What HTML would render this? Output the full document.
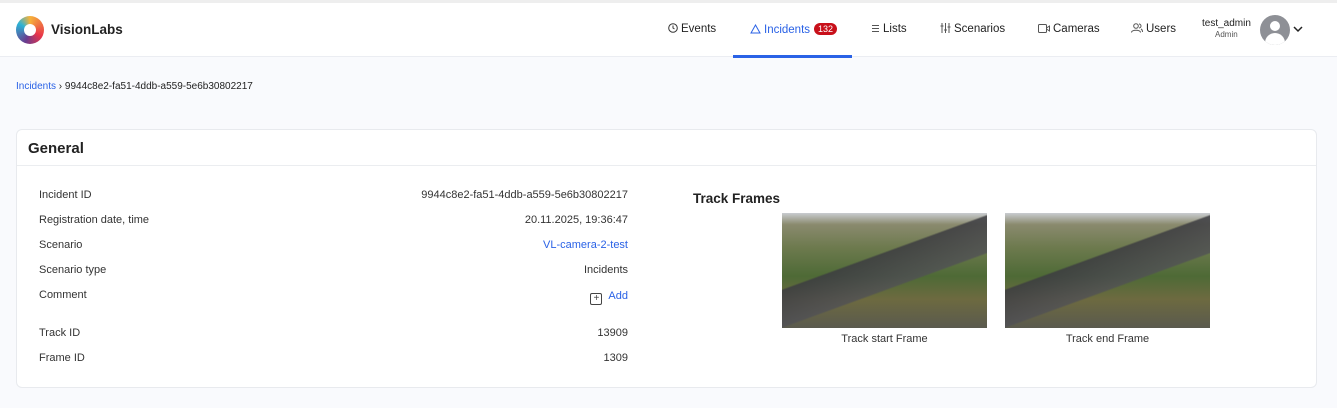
<!DOCTYPE html>
<html><head><meta charset="utf-8"><style>
*{box-sizing:border-box;margin:0;padding:0}
body{width:1337px;height:408px;background:#f9fafd;font-family:"Liberation Sans",sans-serif;color:#222;position:relative;overflow:hidden;font-size:11px}
.top{position:absolute;left:0;top:0;width:1337px;height:3px;background:#eee}
.nav{position:absolute;left:0;top:3px;width:1337px;height:54px;background:#fff;border-bottom:1px solid #ebedf2}
.logo{position:absolute;left:16px;top:13px;width:28px;height:28px;border-radius:50%;background:conic-gradient(#f6b23a,#e8344a 120deg,#6a3b8e 200deg,#2bb3d6 300deg,#f6b23a)}
.logo:after{content:"";position:absolute;left:8px;top:8px;width:12px;height:12px;border-radius:50%;background:#fff}
.brand{position:absolute;left:51px;top:19px;font-size:13.5px;font-weight:bold;color:#222}
.it{position:absolute;top:20px;font-size:11.5px;color:#222;white-space:nowrap}
.it svg{vertical-align:-1px;margin-right:3px}
.act{color:#2a62e6}
.ul{position:absolute;left:733px;top:52px;width:119px;height:3px;background:#2a62e6}
.badge{display:inline-block;background:#c8101a;color:#fff;border-radius:8px;font-size:9px;padding:1px 4px;margin-left:4px;vertical-align:1px}
.crumb{position:absolute;left:16px;top:81px;font-size:10px}
.card{position:absolute;left:16px;top:129px;width:1301px;height:259px;background:#fff;border:1px solid #e8eaee;border-radius:6px}
.card h2{position:absolute;left:11px;top:10px;font-size:15px;font-weight:bold}
.hl{position:absolute;left:0;top:35px;width:100%;height:1px;background:#ebedf0}
.l{position:absolute;left:22px;font-size:11px;color:#333}
.r{position:absolute;right:688px;font-size:11px;color:#333;text-align:right}
.tf{position:absolute;left:676px;top:61px;font-size:13.5px;font-weight:bold;color:#222}
.img{position:absolute;top:83px;width:205px;height:115px;background:
linear-gradient(160deg,transparent 40%,rgba(60,60,65,.85) 41%,rgba(80,80,85,.8) 60%,transparent 61%),
linear-gradient(180deg,#c9ccd0 0%,#8a8a6e 10%,#6d7a4e 30%,#4e6a36 55%,#6d6a40 75%,#5a5a4e 100%)}
.cap{position:absolute;top:203px;width:205px;text-align:center;font-size:11px;color:#333}
</style></head><body>
<div class="top"></div>
<div class="nav">
<div class="logo"></div><div class="brand">VisionLabs</div>
<div class="it" style="left:668px"><svg width="10" height="10" viewBox="0 0 10 10" fill="none" stroke="#333"><circle cx="5" cy="5" r="4.3"/><path d="M5 2.5V5l1.5 1"/></svg>Events</div>
<div class="it act" style="left:750px"><svg width="11" height="10" viewBox="0 0 11 10" fill="none" stroke="#2a62e6"><path d="M5.5 1L10 9H1z"/></svg>Incidents<span class="badge">132</span></div>
<div class="it" style="left:871px"><svg width="9" height="9" viewBox="0 0 9 9" stroke="#555"><path d="M1 1.5h7M1 4.5h7M1 7.5h7"/></svg>Lists</div>
<div class="it" style="left:940px"><svg width="11" height="10" viewBox="0 0 11 10" stroke="#555"><path d="M2 0v10M5.5 0v10M9 0v10M0.5 3h3M4 7h3M7.5 4h3"/></svg>Scenarios</div>
<div class="it" style="left:1038px"><svg width="12" height="9" viewBox="0 0 12 9" fill="none" stroke="#555"><rect x="0.5" y="0.5" width="8" height="8" rx="1"/><path d="M8.5 4l3-2v5l-3-2"/></svg>Cameras</div>
<div class="it" style="left:1131px"><svg width="12" height="10" viewBox="0 0 12 10" fill="none" stroke="#555"><circle cx="5" cy="3" r="2.3"/><path d="M0.5 9.5c0-3 9-3 9 0M8 1a2 2 0 010 4M10 6c1 .5 1.5 1.5 1.5 3"/></svg>Users</div>
<div style="position:absolute;left:1202px;top:15px;font-size:10px">test_admin</div>
<div style="position:absolute;left:1215px;top:27px;font-size:8px;color:#555">Admin</div>
<div style="position:absolute;left:1260px;top:12px;width:30px;height:30px;border-radius:50%;background:#8e9096;overflow:hidden"><div style="position:absolute;left:10px;top:6px;width:10px;height:10px;border-radius:50%;background:#fff"></div><div style="position:absolute;left:5px;top:18px;width:20px;height:14px;border-radius:10px 10px 0 0;background:#fff"></div></div>
<svg style="position:absolute;left:1293px;top:23px" width="10" height="7" viewBox="0 0 10 7" fill="none" stroke="#222" stroke-width="1.5"><path d="M1 1l4 4 4-4"/></svg>
<div class="ul"></div>
</div>
<div class="crumb"><span style="color:#2a62e6">Incidents</span> › 9944c8e2-fa51-4ddb-a559-5e6b30802217</div>
<div class="card">
<h2>General</h2><div class="hl"></div>
<div class="l" style="top:59px">Incident ID</div><div class="r" style="top:59px">9944c8e2-fa51-4ddb-a559-5e6b30802217</div>
<div class="l" style="top:84px">Registration date, time</div><div class="r" style="top:84px">20.11.2025, 19:36:47</div>
<div class="l" style="top:109px">Scenario</div><div class="r" style="top:109px;color:#2a62e6">VL-camera-2-test</div>
<div class="l" style="top:134px">Scenario type</div><div class="r" style="top:134px">Incidents</div>
<div class="l" style="top:159px">Comment</div><div class="r" style="top:160px;color:#2a62e6"><span style="display:inline-block;width:12px;height:12px;border:1.5px solid #444;border-radius:2px;color:#444;font-size:10px;line-height:9px;text-align:center;vertical-align:-2px;margin-right:6px">+</span>Add</div>
<div class="l" style="top:197px">Track ID</div><div class="r" style="top:197px">13909</div>
<div class="l" style="top:222px">Frame ID</div><div class="r" style="top:222px">1309</div>
<div class="tf">Track Frames</div>
<div class="img" style="left:765px"></div><div class="cap" style="left:765px">Track start Frame</div>
<div class="img" style="left:988px"></div><div class="cap" style="left:988px">Track end Frame</div>
</div>
</body></html>
